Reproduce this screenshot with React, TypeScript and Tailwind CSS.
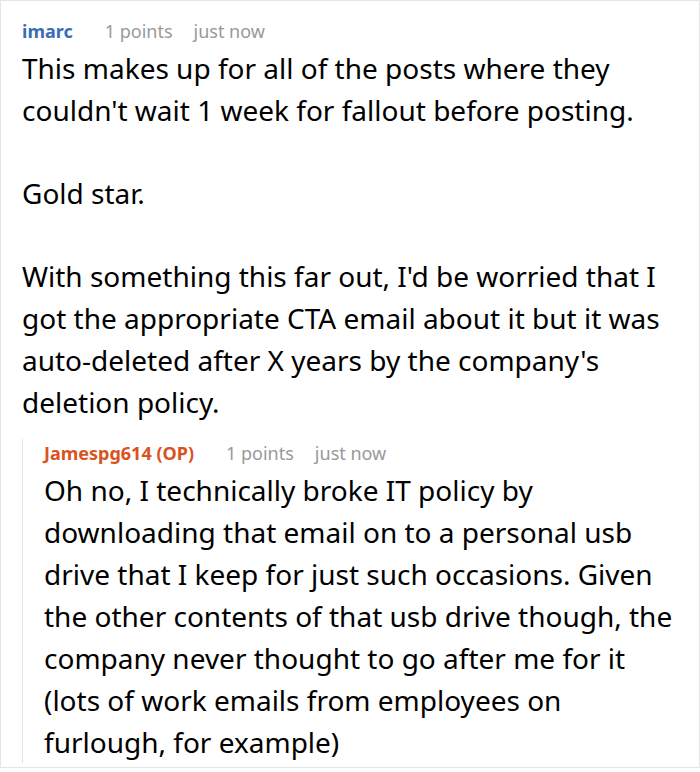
import React from 'react';

type CommentProps = {
  author: string;
  isOp?: boolean;
  points: number;
  time: string;
  paragraphs: string[];
};

const Comment: React.FC<CommentProps> = ({ author, isOp, points, time, paragraphs }) => (
  <div>
    <div className="flex items-center gap-[21px] text-[18px] leading-[24px]">
      <span className={isOp ? 'font-bold text-[#d9531e]' : 'font-bold text-[#3a6db5]'}>
        {author}
        {isOp ? ' (OP)' : ''}
      </span>
      <span className="ml-[11px] text-[#999]">{points} points</span>
      <span className="text-[#999]">{time}</span>
    </div>
    <div className="mt-[4px] flex flex-col gap-[41px] text-[28px] leading-[42px] text-black">
      {paragraphs.map((p, i) => (
        <p key={i}>{p}</p>
      ))}
    </div>
  </div>
);

export default function App() {
  return (
    <div className="h-[772px] w-[700px] bg-white font-['Noto_Sans',sans-serif]">
      <div className="h-[768px] overflow-hidden border border-[#e5e5e5] pl-[21px] pr-[24px] pt-[18px]">
        <Comment
          author="imarc"
          points={1}
          time="just now"
          paragraphs={[
            "This makes up for all of the posts where they couldn't wait 1 week for fallout before posting.",
            'Gold star.',
            "With something this far out, I'd be worried that I got the appropriate CTA email about it but it was auto-deleted after X years by the company's deletion policy.",
          ]}
        />
        <div className="mt-[16px] border-l border-[#e5e5e5] pl-[21px] pt-[2px]">
          <Comment
            author="Jamespg614"
            isOp
            points={1}
            time="just now"
            paragraphs={[
              'Oh no, I technically broke IT policy by downloading that email on to a personal usb drive that I keep for just such occasions. Given the other contents of that usb drive though, the company never thought to go after me for it (lots of work emails from employees on furlough, for example)',
            ]}
          />
        </div>
      </div>
    </div>
  );
}
